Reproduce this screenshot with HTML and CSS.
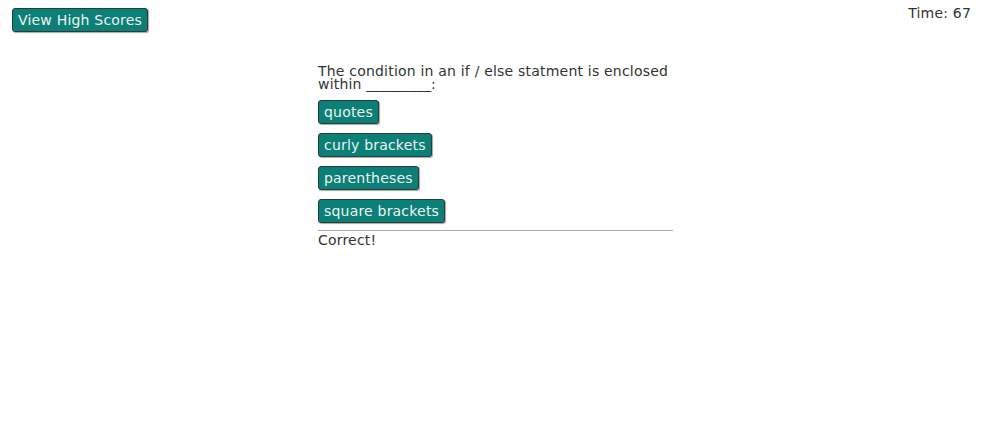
FILE: index.html
```html
<!DOCTYPE html>
<html>
<head>
<meta charset="utf-8">
<link rel="stylesheet" href="styles.css">
</head>
<body>
<header class="top">
  <button class="btn">View High Scores</button>
  <div class="timer">Time: 67</div>
</header>
<main class="quiz">
  <h2 class="question">The condition in an if / else statment is enclosed within _________:</h2>
  <div class="choices">
    <button class="btn">quotes</button>
    <button class="btn">curly brackets</button>
    <button class="btn">parentheses</button>
    <button class="btn">square brackets</button>
  </div>
  <div class="feedback">Correct!</div>
</main>
</body>
</html>
```
FILE: styles.css
```css
html, body {
  margin: 0;
  padding: 0;
  background: #fff;
}
body {
  font-family: "DejaVu Sans", Verdana, sans-serif;
  font-size: 14px;
  letter-spacing: 0.2px;
  color: #333;
}
.top {
  display: flex;
  justify-content: space-between;
  align-items: flex-start;
  padding: 8px 11px 0 12px;
}
.timer {
  margin-top: -3px;
  color: #333;
}
.btn {
  font-family: "DejaVu Sans", Verdana, sans-serif;
  font-size: 14px;
  letter-spacing: 0.2px;
  background: #0b8077;
  color: #f2f2f2;
  border: 1px solid #2c3a38;
  border-radius: 3px;
  padding: 3px 5px;
  height: 24px;
  line-height: 16px;
  box-shadow: 1px 1px 1px rgba(0,0,0,0.35);
  cursor: pointer;
}
.quiz {
  width: 355px;
  margin: 33px 0 0 318px;
}
.question {
  font-size: 14px;
  font-weight: normal;
  line-height: 13px;
  margin: 0 0 9px 0;
  color: #333;
}
.choices {
  display: flex;
  flex-direction: column;
  align-items: flex-start;
  gap: 9px;
}
.feedback {
  margin-top: 7px;
  border-top: 1px solid #aaa;
  padding-top: 1px;
  color: #333;
}
```
